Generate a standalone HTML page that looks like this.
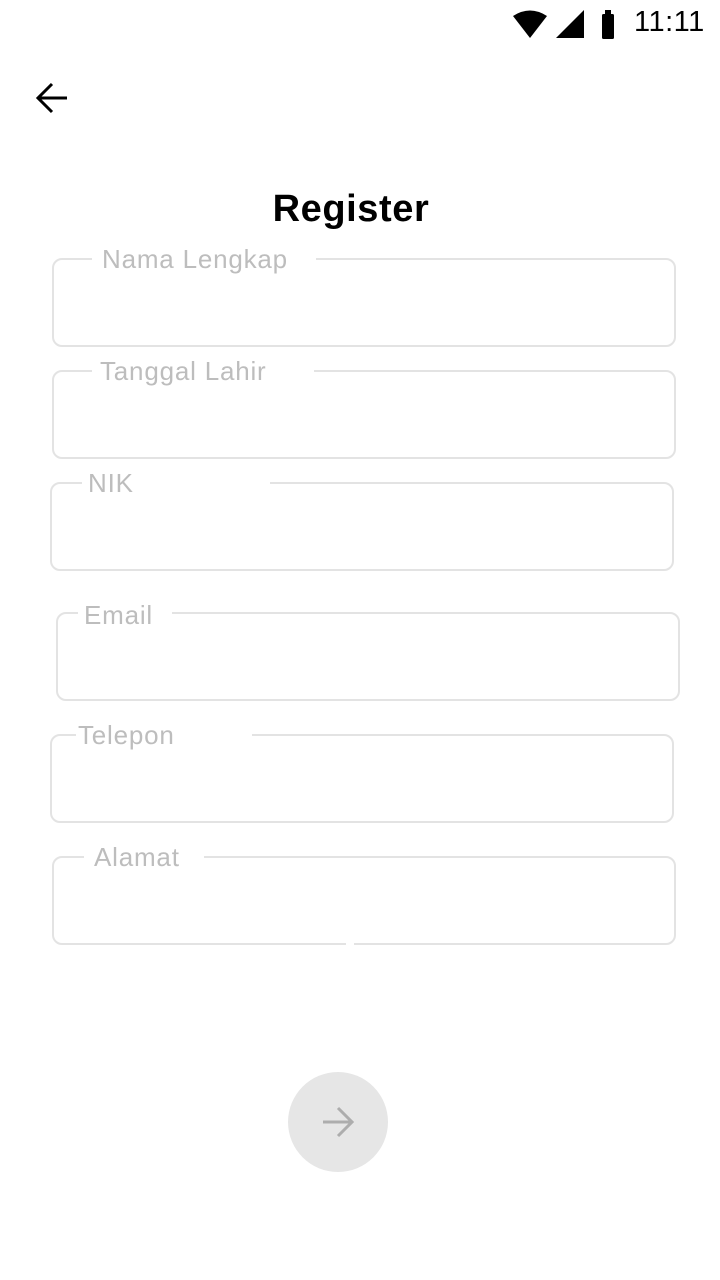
<!DOCTYPE html>
<html><head><meta charset="utf-8"><style>
body{margin:0;width:720px;height:1280px;background:#fff;position:relative;overflow:hidden;font-family:"Liberation Sans",sans-serif}
.box{position:absolute;width:620px;height:85px;border:2px solid #e3e3e3;border-radius:10px;box-sizing:content-box}
.gap{position:absolute;top:-4px;height:6px;background:#fff}
.lbl{position:absolute;font-size:26px;color:#bdbdbd;line-height:30px;white-space:nowrap;letter-spacing:0.8px}
</style></head><body>
<svg style="position:absolute;left:512px;top:8px" width="110" height="32" viewBox="0 0 110 32">
<path d="M1 8 Q18 -3 35 8 L18 30 Z" fill="#000"/>
<path d="M44 30 L72 30 L72 2 Z" fill="#000"/>
<rect x="90" y="6" width="12" height="25" rx="1.5" fill="#000"/>
<rect x="93" y="2" width="6" height="5" fill="#000"/>
</svg>
<div style="position:absolute;left:634px;top:6px;font-size:29px;color:#000;letter-spacing:0.5px">11:11</div>
<svg style="position:absolute;left:34px;top:80px" width="36" height="36" viewBox="0 0 36 36"><path d="M33 18H5M18 4L4 18l14 14" stroke="#000" stroke-width="3" fill="none"/></svg>
<div style="position:absolute;left:0;width:702px;top:188px;text-align:center;font-size:38px;font-weight:bold;color:#000;letter-spacing:0.6px">Register</div>

<div class="box" style="left:52px;top:258px"><div class="gap" style="left:38px;width:224px"></div></div>
<div class="lbl" style="left:102px;top:244px">Nama Lengkap</div>
<div class="box" style="left:52px;top:370px"><div class="gap" style="left:38px;width:222px"></div></div>
<div class="lbl" style="left:100px;top:356px">Tanggal Lahir</div>
<div class="box" style="left:50px;top:482px"><div class="gap" style="left:30px;width:188px"></div></div>
<div class="lbl" style="left:88px;top:468px">NIK</div>
<div class="box" style="left:56px;top:612px"><div class="gap" style="left:20px;width:94px"></div></div>
<div class="lbl" style="left:84px;top:600px">Email</div>
<div class="box" style="left:50px;top:734px"><div class="gap" style="left:24px;width:176px"></div></div>
<div class="lbl" style="left:78px;top:720px">Telepon</div>
<div class="box" style="left:52px;top:856px"><div class="gap" style="left:30px;width:120px"></div><div style="position:absolute;left:292px;bottom:-3px;width:8px;height:5px;background:#fff"></div></div>
<div class="lbl" style="left:94px;top:842px">Alamat</div>

<div style="position:absolute;left:288px;top:1072px;width:100px;height:100px;border-radius:50%;background:#e6e6e6"></div>
<svg style="position:absolute;left:320px;top:1104px" width="36" height="36" viewBox="0 0 36 36"><path d="M3 18H32M18 4l14 14-14 14" stroke="#adadad" stroke-width="3" fill="none"/></svg>
</body></html>
